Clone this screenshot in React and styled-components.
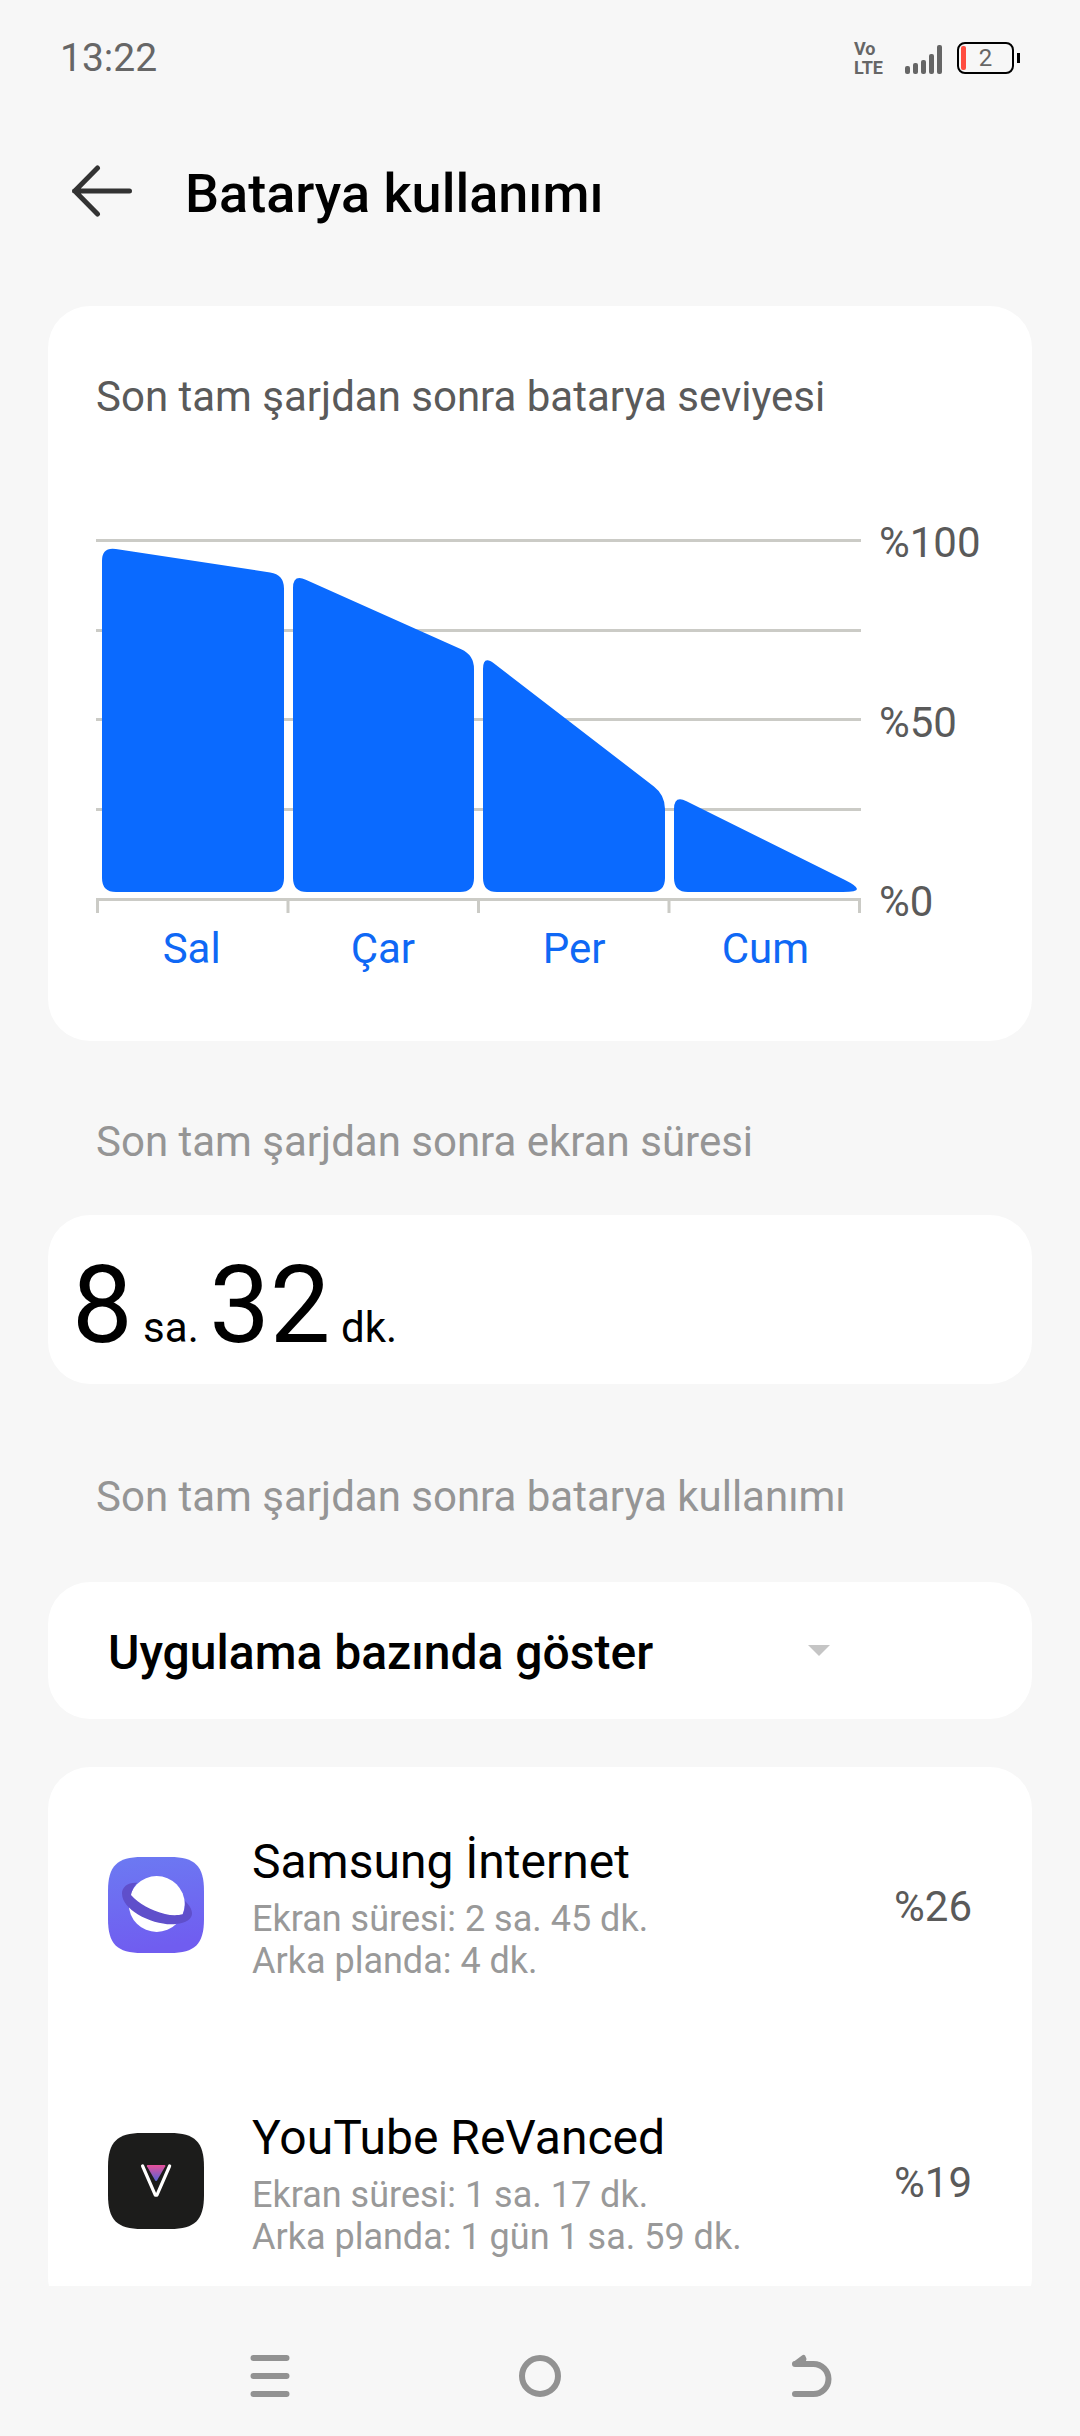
import React, { useState } from "react";
import styled, { createGlobalStyle } from "styled-components";

const GlobalStyle = createGlobalStyle`
  *, *::before, *::after { box-sizing: border-box; }
  body {
    margin: 0;
    background: #f7f7f7;
    color: #000;
    font-family: Roboto, "Liberation Sans", sans-serif;
  }
  h1, h2, h3, p, ul { margin: 0; padding: 0; font-weight: 400; }
  button, select { font: inherit; color: inherit; background: none; border: 0; padding: 0; margin: 0; }
`;

const Screen = styled.div`
  display: flex;
  flex-direction: column;
  height: 100vh;
`;

const StatusBar = styled.div`
  display: flex;
  align-items: center;
  justify-content: space-between;
  height: 116px;
  padding: 0 60px;
  flex: none;
  color: #666;
`;

const Clock = styled.time`
  font-size: 39px;
  line-height: 48px;
`;

const StatusIcons = styled.div`
  display: flex;
  align-items: center;
`;

const Network = styled.span`
  margin-right: 22px;
  font-size: 18px;
  font-weight: 700;
  line-height: 19px;
`;

const Battery = styled.div`
  display: flex;
  align-items: center;
  margin-left: 15px;
`;

const BatteryShell = styled.div`
  display: flex;
  align-items: center;
  width: 57px;
  height: 32px;
  padding: 0 2px;
  border: 2px solid #000;
  border-radius: 8px;
  font-size: 24px;
  line-height: 28px;
`;

const BatteryCharge = styled.span`
  width: 5px;
  height: 24px;
  border-radius: 2px;
  background: #ff4d40;
`;

const BatteryValue = styled.span`
  flex: 1;
  padding-right: 5px;
  text-align: center;
`;

const BatteryTip = styled.span`
  width: 3px;
  height: 10px;
  margin-left: 3px;
  background: #000;
`;

const Header = styled.header`
  display: flex;
  align-items: center;
  flex: none;
  height: 150px;
  padding: 0 72px;
  gap: 53px;
`;

const IconButton = styled.button`
  display: flex;
  cursor: pointer;
`;

const Title = styled.h1`
  padding-top: 6px;
  font-size: 54px;
  font-weight: 500;
  line-height: 64px;
`;

const Content = styled.main`
  flex: 1;
  min-height: 0;
  padding: 40px 48px 0;
  overflow-y: auto;
  scrollbar-width: none;
`;

const Card = styled.section`
  border-radius: 42px;
  background: #fff;
`;

const ChartCard = styled(Card)`
  padding: 66px 48px 67px;
`;

const Heading = styled.h2`
  font-size: 42px;
  line-height: 50px;
  color: #5a5a5a;
`;

const SectionLabel = styled(Heading)`
  display: block;
  padding: ${(p) => (p.$roomy ? "88px 48px 60px" : "76px 48px 48px")};
  color: #959595;
`;

const Chart = styled.div`
  display: flex;
  gap: 18px;
  margin-top: 96px;
`;

const Plot = styled.div`
  flex: 1;
  padding-top: 21px;
`;

const PlotArea = styled.svg`
  display: block;
  width: 100%;
  height: 374px;
`;

const Days = styled.div`
  display: grid;
  grid-template-columns: repeat(4, 1fr);
  margin-top: 11px;
  font-size: 42px;
  line-height: 50px;
  text-align: center;
  color: #0f68f5;
`;

const Scale = styled.div`
  display: flex;
  flex-direction: column;
  justify-content: space-between;
  width: 105px;
  height: 409px;
  font-size: 42px;
  line-height: 50px;
  color: #5a5a5a;
`;

const ScreenTime = styled(Card)`
  padding: 27px 24px 16px;
  font-size: 42px;
  line-height: 50px;
`;

const BigNumber = styled.span`
  font-size: 108px;
  line-height: 126px;
`;

const Picker = styled(Card)`
  display: flex;
  align-items: center;
  margin-bottom: 48px;
  padding-right: 202px;
`;

const PickerSelect = styled.select`
  flex: 1;
  height: 137px;
  padding: 4px 0 0 60px;
  appearance: none;
  outline: none;
  font-size: 48px;
  font-weight: 500;
`;

const AppList = styled.ul`
  border-radius: 42px;
  background: #fff;
  list-style: none;
`;

const AppRow = styled.li`
  display: flex;
  align-items: center;
  gap: 48px;
  height: 276px;
  padding: 0 60px;
`;

const AppText = styled.div`
  flex: 1;
  padding-top: 6px;
`;

const AppName = styled.h3`
  margin-bottom: 8px;
  font-size: 48px;
  line-height: 56px;
`;

const AppDetail = styled.p`
  font-size: 36px;
  line-height: 42px;
  color: #999;
`;

const Share = styled.span`
  padding-top: 4px;
  font-size: 42px;
  line-height: 50px;
  color: #5a5a5a;
`;

const NavBar = styled.nav`
  display: flex;
  justify-content: center;
  align-items: center;
  flex: none;
  gap: 222px;
  height: 150px;
  padding-top: 30px;
`;

const GRID_LINES = [0, 90, 179, 269, 359];
const TICKS = [0, 190.5, 381, 571.5, 762];

/* Each bar is a four-sided shape whose corners are rounded along both edges. */
const BARS = [
  { left: 6, right: 188, from: 8, to: 35.5 },
  { left: 197, right: 378, from: 35, to: 116 },
  { left: 387, right: 569, from: 116, to: 256 },
  { left: 578, right: 761, from: 256, to: 347 },
];
const BAR_BOTTOM = 353;
const CORNER = 14;

function roundedShape(points) {
  const toward = (a, b) => {
    const length = Math.hypot(b[0] - a[0], b[1] - a[1]);
    const t = Math.min(CORNER / length, 0.5);
    return `${a[0] + (b[0] - a[0]) * t} ${a[1] + (b[1] - a[1]) * t}`;
  };
  return (
    points
      .map((point, i) => {
        const before = points[(i + points.length - 1) % points.length];
        const after = points[(i + 1) % points.length];
        return `${i ? "L" : "M"}${toward(point, before)} Q${point[0]} ${point[1]} ${toward(point, after)}`;
      })
      .join(" ") + " Z"
  );
}

function BatteryPlot() {
  return (
    <PlotArea viewBox="0 0 765 374" preserveAspectRatio="none" role="img" aria-label="Batarya seviyesi">
      {GRID_LINES.map((y) => (
        <rect key={y} x="0" y={y} width="765" height="3" fill="#cbcbc6" />
      ))}
      {TICKS.map((x) => (
        <rect key={x} x={x} y="359" width="3" height="15" fill="#cbcbc6" />
      ))}
      {BARS.map((b) => (
        <path
          key={b.left}
          fill="#0a6aff"
          d={roundedShape([
            [b.left, b.from],
            [b.right, b.to],
            [b.right, BAR_BOTTOM],
            [b.left, BAR_BOTTOM],
          ])}
        />
      ))}
    </PlotArea>
  );
}

const TILE = "M0 34 C0 9 9 0 34 0 H62 C87 0 96 9 96 34 V62 C96 87 87 96 62 96 H34 C9 96 0 87 0 62 Z";

function BrowserIcon() {
  return (
    <svg width="96" height="96" viewBox="0 0 96 96" aria-hidden="true">
      <defs>
        <linearGradient id="browserTile" x1="0" y1="0" x2="0.15" y2="1">
          <stop offset="0" stopColor="#6c7af2" />
          <stop offset="1" stopColor="#705df0" />
        </linearGradient>
      </defs>
      <path d={TILE} fill="url(#browserTile)" />
      <circle cx="48.7" cy="47" r="28" fill="#fff" />
      <path
        d="M29.3 25.7 C20 25 14 30 14 36.3 C14 45 21 52 30 57.5 C42 64.5 57 68.5 68 67 C78 66 84 62 84 56.5 C84 52 81 48 77 44 C77.5 50 76 55 74.7 57.3 C70 58.5 63 58.5 57 57 C43 53.5 31 47 23 38 C24 33 26 29 29.3 25.7Z"
        fill="#5f4fcb"
      />
    </svg>
  );
}

function VideoIcon() {
  return (
    <svg width="96" height="96" viewBox="0 0 96 96" aria-hidden="true">
      <defs>
        <linearGradient id="videoMark" x1="0" y1="0" x2="0" y2="1">
          <stop offset="0" stopColor="#e8509a" />
          <stop offset="1" stopColor="#5463d6" />
        </linearGradient>
      </defs>
      <path d={TILE} fill="#1c1c1b" />
      <path d="M34.6 33 L47.3 62.2 H48.9 L61.6 33" fill="none" stroke="#fff" strokeWidth="3.2" strokeLinejoin="round" strokeLinecap="round" />
      <path d="M39.5 32 H56.7 Q57.8 32.2 57.3 33.2 L49 47.4 Q48.1 48.6 47.2 47.4 L38.9 33.2 Q38.5 32.2 39.5 32Z" fill="url(#videoMark)" />
    </svg>
  );
}

const APPS = [
  { name: "Samsung İnternet", screen: "Ekran süresi: 2 sa. 45 dk.", background: "Arka planda: 4 dk.", share: "%26", Icon: BrowserIcon },
  { name: "YouTube ReVanced", screen: "Ekran süresi: 1 sa. 17 dk.", background: "Arka planda: 1 gün 1 sa. 59 dk.", share: "%19", Icon: VideoIcon },
];

const SIGNAL = [8, 11, 14, 20, 29];

export default function App() {
  const [view, setView] = useState("app");
  return (
    <Screen lang="tr">
      <GlobalStyle />
      <StatusBar>
        <Clock>13:22</Clock>
        <StatusIcons>
          <Network>
            Vo
            <br />
            LTE
          </Network>
          <svg width="37" height="32" viewBox="0 0 37 32" aria-hidden="true">
            {SIGNAL.map((h, i) => (
              <rect key={h} x={i * 8} y={32 - h} width="5" height={h} rx="2" fill="#666" />
            ))}
          </svg>
          <Battery>
            <BatteryShell>
              <BatteryCharge />
              <BatteryValue>2</BatteryValue>
            </BatteryShell>
            <BatteryTip />
          </Battery>
        </StatusIcons>
      </StatusBar>

      <Header>
        <IconButton type="button" aria-label="Geri">
          <svg width="60" height="52" viewBox="0 0 60 52" fill="none" stroke="#333" strokeWidth="5" strokeLinecap="round" strokeLinejoin="round">
            <path d="M57.5 26 H2.5 M25.5 3 L2.8 26 L25.5 49" />
          </svg>
        </IconButton>
        <Title>Batarya kullanımı</Title>
      </Header>

      <Content>
        <ChartCard>
          <Heading>Son tam şarjdan sonra batarya seviyesi</Heading>
          <Chart>
            <Plot>
              <BatteryPlot />
              <Days>
                <span>Sal</span>
                <span>Çar</span>
                <span>Per</span>
                <span>Cum</span>
              </Days>
            </Plot>
            <Scale>
              <span>%100</span>
              <span>%50</span>
              <span>%0</span>
            </Scale>
          </Chart>
        </ChartCard>

        <SectionLabel>Son tam şarjdan sonra ekran süresi</SectionLabel>
        <ScreenTime>
          <BigNumber>8</BigNumber> sa. <BigNumber>32</BigNumber> dk.
        </ScreenTime>

        <SectionLabel as="label" htmlFor="view" $roomy>
          Son tam şarjdan sonra batarya kullanımı
        </SectionLabel>
        <Picker>
          <PickerSelect id="view" value={view} onChange={(e) => setView(e.target.value)}>
            <option value="app">Uygulama bazında göster</option>
          </PickerSelect>
          <svg width="22" height="11" viewBox="0 0 22 11" aria-hidden="true">
            <path d="M0 0 H22 L11 11 Z" fill="#c5c5c5" />
          </svg>
        </Picker>

        <AppList>
          {APPS.map(({ name, screen, background, share, Icon }) => (
            <AppRow key={name}>
              <Icon />
              <AppText>
                <AppName>{name}</AppName>
                <AppDetail>{screen}</AppDetail>
                <AppDetail>{background}</AppDetail>
              </AppText>
              <Share>{share}</Share>
            </AppRow>
          ))}
        </AppList>
      </Content>

      <NavBar>
        <IconButton type="button" aria-label="Son uygulamalar">
          <svg width="48" height="48" viewBox="0 0 48 48" stroke="#929292" strokeWidth="6" strokeLinecap="round">
            <path d="M7.5 6 H40.5 M7.5 24 H40.5 M7.5 42 H40.5" />
          </svg>
        </IconButton>
        <IconButton type="button" aria-label="Ana ekran">
          <svg width="48" height="48" viewBox="0 0 48 48" fill="none" stroke="#929292" strokeWidth="6">
            <circle cx="24" cy="24" r="18" />
          </svg>
        </IconButton>
        <IconButton type="button" aria-label="Geri git">
          <svg width="48" height="48" viewBox="0 0 48 48" fill="none" stroke="#929292" strokeWidth="6" strokeLinecap="round">
            <path d="M9 12 H27.5 A15 15 0 0 1 27.5 42 H9" />
            <path d="M8.5 11.5 L17.5 4.8 L18.5 7 L17 11 Z" strokeWidth="4" strokeLinejoin="round" fill="#929292" />
          </svg>
        </IconButton>
      </NavBar>
    </Screen>
  );
}
